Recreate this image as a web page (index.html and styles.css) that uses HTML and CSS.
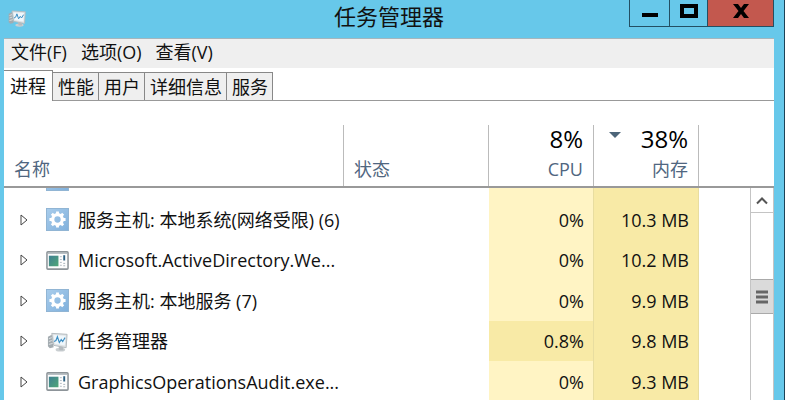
FILE: index.html
```html
<!DOCTYPE html>
<html lang="zh-CN">
<head>
<meta charset="utf-8">
<title>任务管理器</title>
<link rel="stylesheet" href="styles.css">
</head>
<body>
<svg class="defs" aria-hidden="true">
  <defs>
    <linearGradient id="blue" x1="0" y1="0" x2="1" y2="1">
      <stop offset="0" stop-color="#a9cdec"/><stop offset="1" stop-color="#7fb0dc"/>
    </linearGradient>
    <linearGradient id="green" x1="0" y1="0" x2="1" y2="1">
      <stop offset="0" stop-color="#3f7f92"/><stop offset="1" stop-color="#4fa777"/>
    </linearGradient>
    <symbol id="gear" viewBox="0 0 24 24">
      <rect x=".5" y=".5" width="23" height="23" fill="url(#blue)" stroke="#8fb3d3"/>
      <circle cx="12" cy="12" r="5" fill="none" stroke="#fff" stroke-width="3.4"/>
      <path d="M12 3.6v3M12 17.4v3M3.6 12h3M17.4 12h3M6.1 6.1l2 2M15.9 15.9l2 2M6.1 17.9l2-2M15.9 8.1l2-2" stroke="#fff" stroke-width="3"/>
    </symbol>
    <symbol id="app" viewBox="0 0 24 24">
      <rect x="1" y="3" width="22" height="18" rx="1" fill="#fdfdfd" stroke="#8d9499" stroke-width="1.6"/>
      <path d="M2 4.5h20" stroke="#b9c0c5" stroke-width="1.4"/>
      <rect x="3" y="7" width="10" height="11" fill="url(#green)"/>
      <path d="M14.5 8h2M14.5 11h2M14.5 14h2M14.5 17h2" stroke="#b4bcc4"/>
      <path d="M19 6.5V12" stroke="#2c6082" stroke-width="2"/>
      <path d="M18 15h2M18 17.5h2" stroke="#a9b3ba"/>
    </symbol>
    <symbol id="monitor" viewBox="0 0 24 24">
      <path d="M2 7l4-2 2 13-4 1-2-2z" fill="#a3abb0"/>
      <path d="M3 9l3-1M3 12l3-1M3 15l4-1" stroke="#dfe3e5"/>
      <ellipse cx="15" cy="20.5" rx="5" ry="2" fill="#c9ced1"/>
      <path d="M13 17h5v4h-4z" fill="#b5bbbf"/>
      <path d="M6 3.500L22 4.500 21 18.500 8 16z" fill="#dfe2e4" stroke="#b3babe"/>
      <path d="M7.8 5.3l12.600.8-.8 10.200L9.200 14.400z" fill="#eff7fc"/>
      <path d="M8.400 12l2-1 1.500-4 2 6 2-3 1.500 2 2.500-4" fill="none" stroke="#3d8fc4" stroke-width="1.2"/>
    </symbol>
  </defs>
</svg>

<div class="window">
  <header class="titlebar">
    <svg class="app-icon" aria-hidden="true"><use href="#monitor"/></svg>
    <h1>任务管理器</h1>
    <div class="controls">
      <button type="button" class="min" aria-label="最小化"><svg width="16" height="14" viewBox="0 0 16 14"><path d="M0 11h16" stroke="#000" stroke-width="4"/></svg></button>
      <button type="button" class="max" aria-label="最大化"><svg width="18" height="14" viewBox="0 0 18 14"><path d="M2 2h14v10H2z" fill="none" stroke="#000" stroke-width="4"/></svg></button>
      <button type="button" class="close" aria-label="关闭"><svg width="16" height="14" viewBox="0 0 16 14"><path d="M0 0h5l3 4 3-4h5l-5.500 7L16 14h-5l-3-4-3 4H0l5.500-7z" fill="#000"/></svg></button>
    </div>
  </header>

  <main class="client">
    <nav class="menu">
      <button type="button">文件(F)</button>
      <button type="button">选项(O)</button>
      <button type="button">查看(V)</button>
    </nav>
    <div class="tabs" role="tablist">
      <button type="button" role="tab" aria-selected="true">进程</button>
      <button type="button" role="tab" aria-selected="false">性能</button>
      <button type="button" role="tab" aria-selected="false">用户</button>
      <button type="button" role="tab" aria-selected="false">详细信息</button>
      <button type="button" role="tab" aria-selected="false">服务</button>
    </div>

    <table class="grid head">
      <colgroup><col class="c-name"><col class="c-status"><col class="c-num"><col class="c-num"><col></colgroup>
      <thead>
        <tr>
          <th scope="col">名称</th>
          <th scope="col">状态</th>
          <th scope="col" class="num"><strong>8%</strong>CPU</th>
          <th scope="col" class="num sorted" aria-sort="descending"><strong>38%</strong>内存</th>
          <td></td>
        </tr>
      </thead>
    </table>

    <div class="scroller">
      <table class="grid rows">
        <colgroup><col class="c-name"><col class="c-status"><col class="c-num"><col class="c-num"><col></colgroup>
        <tbody>
          <tr class="cut"><td><div class="clip"><svg class="icon" aria-hidden="true"><use href="#gear"/></svg></div></td><td></td><td class="cpu"></td><td class="mem"></td><td></td></tr>
          <tr>
            <td><div class="proc"><button type="button" class="expand" aria-label="展开"><svg width="8" height="12" viewBox="0 0 8 12"><path d="M1 1l6 5-6 5z" fill="#fff" stroke="#444"/></svg></button><svg class="icon" aria-hidden="true"><use href="#gear"/></svg><span>服务主机: 本地系统(网络受限) (6)</span></div></td>
            <td></td><td class="cpu">0%</td><td class="mem">10.3 MB</td><td></td>
          </tr>
          <tr>
            <td><div class="proc"><button type="button" class="expand" aria-label="展开"><svg width="8" height="12" viewBox="0 0 8 12"><path d="M1 1l6 5-6 5z" fill="#fff" stroke="#444"/></svg></button><svg class="icon" aria-hidden="true"><use href="#app"/></svg><span>Microsoft.ActiveDirectory.We...</span></div></td>
            <td></td><td class="cpu">0%</td><td class="mem">10.2 MB</td><td></td>
          </tr>
          <tr>
            <td><div class="proc"><button type="button" class="expand" aria-label="展开"><svg width="8" height="12" viewBox="0 0 8 12"><path d="M1 1l6 5-6 5z" fill="#fff" stroke="#444"/></svg></button><svg class="icon" aria-hidden="true"><use href="#gear"/></svg><span>服务主机: 本地服务 (7)</span></div></td>
            <td></td><td class="cpu">0%</td><td class="mem">9.9 MB</td><td></td>
          </tr>
          <tr>
            <td><div class="proc"><button type="button" class="expand" aria-label="展开"><svg width="8" height="12" viewBox="0 0 8 12"><path d="M1 1l6 5-6 5z" fill="#fff" stroke="#444"/></svg></button><svg class="icon" aria-hidden="true"><use href="#monitor"/></svg><span>任务管理器</span></div></td>
            <td></td><td class="cpu busy">0.8%</td><td class="mem">9.8 MB</td><td></td>
          </tr>
          <tr>
            <td><div class="proc"><button type="button" class="expand" aria-label="展开"><svg width="8" height="12" viewBox="0 0 8 12"><path d="M1 1l6 5-6 5z" fill="#fff" stroke="#444"/></svg></button><svg class="icon" aria-hidden="true"><use href="#app"/></svg><span>GraphicsOperationsAudit.exe...</span></div></td>
            <td></td><td class="cpu">0%</td><td class="mem">9.3 MB</td><td></td>
          </tr>
        </tbody>
      </table>
      <div class="scrollbar">
        <button type="button" class="up" aria-label="向上滚动"><svg width="12" height="9" viewBox="0 0 12 9"><path d="M1 7.500l5-5 5 5" fill="none" stroke="#555" stroke-width="2"/></svg></button>
        <div class="thumb"><svg width="12" height="14" viewBox="0 0 12 14"><path d="M0 2h12M0 7h12M0 12h12" stroke="#666" stroke-width="3"/></svg></div>
      </div>
    </div>
  </main>
</div>
</body>
</html>
```
FILE: styles.css
```css
* {
  box-sizing: border-box;
}

body {
  margin: 0;
  height: 100vh;
  overflow: hidden;
  font: 18px/24px "Open Sans", "Noto Sans CJK SC", sans-serif;
  color: #111;
}

button {
  margin: 0;
  padding: 0;
  border: 0;
  background: none;
  font: inherit;
  color: inherit;
}

svg {
  display: block;
}

.defs {
  position: absolute;
  width: 0;
  height: 0;
}

.window {
  display: flex;
  flex-direction: column;
  height: 100%;
  padding: 0 10px 0 4px;
  border-right: 1px solid #1c4257;
  background: #67c8ea;
}

/* title bar */
.titlebar {
  display: grid;
  grid-template-columns: 1fr auto 1fr;
  align-items: start;
  flex: none;
  height: 38px;
}

.app-icon {
  width: 22px;
  height: 20px;
  margin: 8px 0 0 2px;
}

h1 {
  margin: 0;
  font-size: 22px;
  line-height: 32px;
  font-weight: 400;
}

.controls {
  display: flex;
  justify-self: end;
  height: 27px;
  border: 1px solid #234f63;
  border-top: 0;
}

.controls button {
  display: flex;
  justify-content: center;
  padding-top: 4px;
  border-left: 1px solid #234f63;
}

.controls .min {
  width: 39px;
  border-left: 0;
}

.controls .max {
  width: 38px;
}

.controls .close {
  width: 66px;
  background: #c3584e;
}

/* client area */
.client {
  display: flex;
  flex-direction: column;
  flex: 1;
  min-height: 0;
  background: #fff;
}

.menu {
  display: flex;
  gap: 14px;
  flex: none;
  height: 30px;
  padding: 0 7px 3px;
  border-top: 1px solid #a5b6bd;
  background: #efefef;
}

.tabs {
  display: flex;
  align-items: flex-end;
  flex: none;
  height: 33px;
  border-bottom: 1px solid #999;
}

.tabs button {
  height: 28px;
  padding: 1px 4px 0 5px;
  border: 1px solid #888;
  border-width: 1px 1px 0 0;
  background: #efefef;
}

.tabs button[aria-selected="true"] {
  height: 31px;
  margin-bottom: -1px;
  padding: 0 6px;
  background: #fff;
}

/* process list */
.grid {
  width: 100%;
  table-layout: fixed;
  border-collapse: separate;
  border-spacing: 0;
}

.c-name {
  width: 340px;
}

.c-status {
  width: 145px;
}

.c-num {
  width: 105px;
}

th,
td {
  padding: 0;
}

.head {
  flex: none;
  padding-top: 24px;
  border-bottom: 2px solid #999;
}

.head th {
  height: 61px;
  padding: 0 10px 5px;
  border-right: 1px solid #bbb;
  font-weight: 400;
  text-align: left;
  vertical-align: bottom;
  color: #506680;
}

.head .num {
  text-align: right;
}

.head strong {
  display: block;
  margin-bottom: 4px;
  font-size: 24px;
  line-height: 28px;
  font-weight: 400;
  color: #000;
}

.sorted strong {
  display: flex;
  justify-content: space-between;
}

.sorted strong::before {
  content: "";
  width: 12px;
  height: 6px;
  margin: 7px 0 0 5px;
  background: #4d6579;
  clip-path: polygon(0 0, 100% 0, 50% 100%);
}

.scroller {
  display: flex;
  align-items: stretch;
  flex: 1;
  min-height: 0;
  overflow: hidden;
}

.rows {
  flex: 1;
  align-self: flex-start;
}

.rows tr {
  height: 41px;
}

.rows tr:nth-child(odd) {
  height: 40px;
}

.rows tr.cut {
  height: 11px;
}

.clip {
  display: flex;
  align-items: flex-end;
  height: 3px;
  margin: 0 0 8px 42px;
  overflow: hidden;
}

.proc {
  display: flex;
  align-items: center;
  padding-left: 16px;
  white-space: nowrap;
}

.expand {
  width: 26px;
}

.icon {
  flex: none;
  width: 23px;
  height: 23px;
  margin-right: 9px;
}

.cpu,
.mem {
  padding-right: 9px;
  border-right: 1px solid #e8dda0;
  text-align: right;
}

.cpu {
  background: #fff4c4;
}

.mem,
.busy {
  background: #f8eaa6;
}

.scrollbar {
  display: flex;
  flex-direction: column;
  gap: 66px;
  width: 24px;
  border: 1px solid #c4c4c4;
  border-width: 0 1px;
}

.up,
.thumb {
  display: flex;
  align-items: center;
  justify-content: center;
}

.up {
  height: 25px;
  border-bottom: 1px solid #c4c4c4;
}

.thumb {
  height: 35px;
  border: 1px solid #aaa;
  border-width: 1px 0;
  background: #dadada;
}
```
